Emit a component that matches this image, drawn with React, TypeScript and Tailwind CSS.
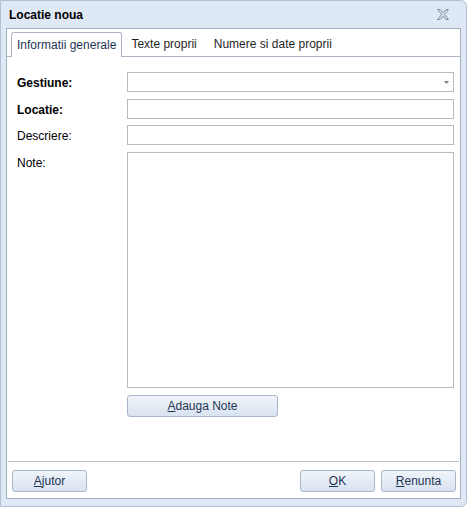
import React from 'react';

const font = { fontFamily: '"Liberation Sans", Arial, sans-serif' };

const CloseIcon: React.FC = () => (
  <svg width="12" height="11" viewBox="0 0 12 11" className="block">
    <path
      d="M0.5 0.5 H3 L6 3.8 L9 0.5 H11.5 L7.3 5.5 L11.5 10.5 H9 L6 7.2 L3 10.5 H0.5 L4.7 5.5 Z"
      fill="none"
      stroke="#7d8898"
      strokeWidth="1"
    />
  </svg>
);

const Button: React.FC<{ hotkey: string; rest: string; className?: string }> = ({ hotkey, rest, className }) => (
  <div
    className={`h-[22px] flex items-center justify-center rounded-[3px] border border-[#a9b7c9] bg-gradient-to-b from-[#f0f4fa] to-[#d9e3f0] text-[12px] text-[#1f3554] ${className ?? ''}`}
  >
    <span>
      <span className="underline">{hotkey}</span>
      {rest}
    </span>
  </div>
);

const Field: React.FC<{ label: string; bold?: boolean; children: React.ReactNode }> = ({ label, bold, children }) => (
  <div className="flex">
    <div className={`w-[110px] shrink-0 pt-[4px] leading-[14px] text-[12px] text-black ${bold ? 'font-bold' : ''}`}>
      {label}
    </div>
    {children}
  </div>
);

export default function App() {
  return (
    <div className="w-[468px] h-[507px] bg-white" style={font}>
      <div className="w-[467px] h-[507px] flex flex-col bg-[#dfe8f5] border border-[#b3c0d2] rounded-tr-[6px] rounded-br-[6px]">
        {/* Title bar */}
        <div className="h-[27px] shrink-0 flex items-center justify-between pl-[8px] pr-[17px]">
          <span className="text-[12px] font-bold text-black">Locatie noua</span>
          <CloseIcon />
        </div>

        {/* White panel */}
        <div className="mx-[5px] h-[471px] shrink-0 flex flex-col bg-white border border-[#a3b0c2]">
          {/* Tabs */}
          <div className="h-[28px] shrink-0 flex items-end pl-[4px] border-b border-[#aab4c2] text-[12px] text-[#1f1f1f]">
            <div className="h-[25px] -mb-px px-[5px] flex items-center bg-white border border-b-0 border-[#aab4c2] rounded-t-[3px] text-[#1f3554]">
              Informatii generale
            </div>
            <div className="h-[25px] pl-[9px] pr-[8px] flex items-center">Texte proprii</div>
            <div className="h-[25px] pl-[9px] flex items-center">Numere si date proprii</div>
          </div>

          {/* Form */}
          <div className="flex flex-col gap-[6.5px] pl-[10px] pr-[6px] pt-[15px]">
            <Field label="Gestiune:" bold>
              <div className="flex-1 h-[20px] border border-[#b5bac2] flex items-center justify-end pr-[4px]">
                <svg width="5" height="3" viewBox="0 0 5 3">
                  <path d="M0 0 H5 L2.5 3 Z" fill="#7a7f87" />
                </svg>
              </div>
            </Field>
            <Field label="Locatie:" bold>
              <div className="flex-1 h-[20px] border border-[#b5bac2]" />
            </Field>
            <Field label="Descriere:">
              <div className="flex-1 h-[20px] border border-[#b5bac2]" />
            </Field>
            <Field label="Note:">
              <div className="flex-1 flex flex-col gap-[7px]">
                <div className="h-[236px] border border-[#b5bac2]" />
                <Button hotkey="A" rest="dauga Note" className="w-[151px]" />
              </div>
            </Field>
          </div>

          <div className="flex-1" />

          {/* Footer */}
          <div className="h-px mx-px bg-[#b8bfc9]" />
          <div className="h-[36px] shrink-0 flex items-start pt-[8px] pl-[5px] pr-[4px]">
            <Button hotkey="A" rest="jutor" className="w-[75px]" />
            <div className="flex-1" />
            <Button hotkey="O" rest="K" className="w-[75px]" />
            <Button hotkey="R" rest="enunta" className="w-[75px] ml-[6px]" />
          </div>
        </div>
      </div>
    </div>
  );
}
